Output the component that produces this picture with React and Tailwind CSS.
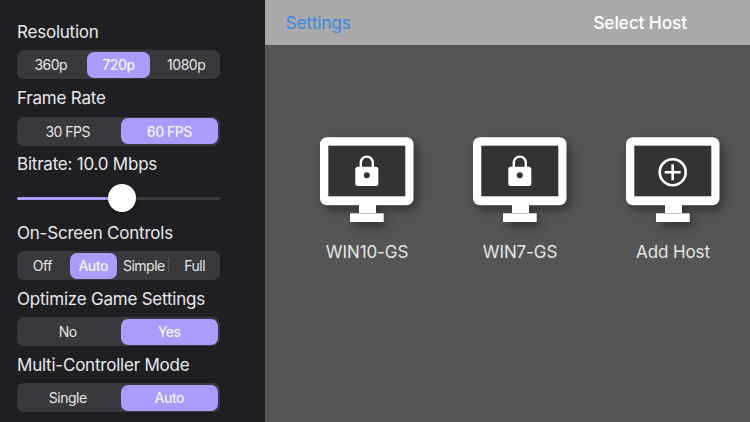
function Segment({ options, selected, gridClass }) {
  return (
    <div className={`grid ${gridClass} h-[29px] w-[203px] rounded-[7px] bg-[#38383d]`}>
      {options.map((o, i) => (
        <div key={o} className="relative flex items-center justify-center">
          {i === selected ? (
            <div className="mx-[2px] flex h-[26px] w-full items-center justify-center rounded-[7px] bg-[#a99cfb] text-[14px] font-medium tracking-[-0.5px] text-[#f4f2ff]">
              {o}
            </div>
          ) : (
            <span className="text-[14px] tracking-[-0.5px] text-[#e6e6e8]">{o}</span>
          )}
          {o === "Simple" && (
            <div className="absolute right-0 top-[7px] h-[14px] w-px bg-[#55555a]" />
          )}
        </div>
      ))}
    </div>
  );
}

function Group({ label, children, className }) {
  return (
    <div className={className}>
      <div className="flex h-[36px] items-center pt-[1px] text-[17px] tracking-[-0.22px] text-[#e8e8ea]">{label}</div>
      {children}
    </div>
  );
}

function Monitor({ children }) {
  return (
    <svg width="94" height="85" viewBox="0 0 94 85" className="overflow-visible drop-shadow-[4px_5px_5px_rgba(0,0,0,0.4)]">
      <rect x="39" y="66" width="17" height="10" fill="#fff" />
      <rect x="30" y="76.3" width="33.7" height="8.7" fill="#fff" />
      <rect x="0" y="0.3" width="93.5" height="68" rx="7" fill="#fff" />
      <rect x="8.3" y="8.7" width="77" height="50.6" fill="#333333" />
      {children}
    </svg>
  );
}

function Lock() {
  return (
    <g>
      <path d="M40.8 31V25.6a6 6 0 0 1 12 0V31" fill="none" stroke="#fff" strokeWidth="2.4" />
      <rect x="35.3" y="29.7" width="23" height="19.3" rx="2.5" fill="#fff" />
      <circle cx="46.8" cy="38.2" r="3" fill="#333333" />
    </g>
  );
}

function Plus() {
  return (
    <g stroke="#fff" strokeWidth="2.6" fill="none">
      <circle cx="46.7" cy="35.2" r="13" />
      <path d="M46.7 27.2v16M38.7 35.2h16" />
    </g>
  );
}

function Host({ name, children }) {
  return (
    <div className="flex w-[153px] flex-col items-center">
      <Monitor>{children}</Monitor>
      <div className="mt-[18px] text-[17px] leading-[24px] tracking-[-0.1px] text-[#e6e6e6]">{name}</div>
    </div>
  );
}

export default function App() {
  return (
    <div
      className="flex h-[422px] w-[750px] overflow-hidden bg-[#1f1f23]"
      style={{ fontFamily: "Inter, 'Liberation Sans', sans-serif" }}
    >
      <aside className="flex w-[265px] shrink-0 flex-col bg-[#1f1f23] pl-[17px] pt-[14px]">
        <Group label="Resolution">
          <Segment options={["360p", "720p", "1080p"]} selected={1} gridClass="grid-cols-3" />
        </Group>
        <Group label="Frame Rate" className="mt-[1.5px]">
          <Segment options={["30 FPS", "60 FPS"]} selected={1} gridClass="grid-cols-2" />
        </Group>
        <Group label="Bitrate: 10.0 Mbps" className="mt-[0.5px]">
          <div className="relative mb-[2px] mt-[2px] flex h-[28px] w-[203px] items-center">
            <div className="h-[3px] w-full rounded-full bg-[#38383d]">
              <div className="h-full w-[105px] rounded-full bg-[#a99cfb]" />
            </div>
            <div className="absolute left-[91px] top-0 h-[28px] w-[28px] rounded-full bg-white shadow-[0_2px_4px_rgba(0,0,0,0.3)]" />
          </div>
        </Group>
        <Group label="On-Screen Controls" className="mt-[1px]">
          <Segment options={["Off", "Auto", "Simple", "Full"]} selected={1} gridClass="grid-cols-4" />
        </Group>
        <Group label="Optimize Game Settings" className="mt-[1px]">
          <Segment options={["No", "Yes"]} selected={1} gridClass="grid-cols-2" />
        </Group>
        <Group label="Multi-Controller Mode" className="mt-[1px]">
          <Segment options={["Single", "Auto"]} selected={1} gridClass="grid-cols-2" />
        </Group>
      </aside>
      <main className="flex min-w-0 flex-1 flex-col bg-[#555555]">
        <header className="flex h-[45px] shrink-0 items-center justify-between bg-[#a9a9a9] pl-[20.5px] pr-[63px] pt-[2px] text-[17.5px] tracking-[-0.2px]">
          <span className="text-[#3a8ce2]">Settings</span>
          <span className="font-medium text-white">Select Host</span>
        </header>
        <div className="flex justify-end pr-[0.5px] pt-[92px]">
          <Host name="WIN10-GS"><Lock /></Host>
          <Host name="WIN7-GS"><Lock /></Host>
          <Host name="Add Host"><Plus /></Host>
        </div>
      </main>
    </div>
  );
}
